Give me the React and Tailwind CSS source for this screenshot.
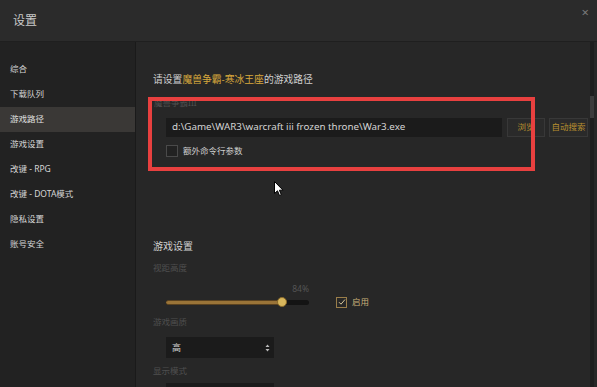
import React from 'react'

const menu = ['综合', '下载队列', '游戏路径', '游戏设置', '改键 - RPG', '改键 - DOTA模式', '隐私设置', '账号安全']

function Sidebar() {
  return (
    <div className="w-[136px] bg-[#222222] border-r border-[#1a1a1a] pt-[15px] shrink-0">
      {menu.map((item) => (
        <div
          key={item}
          className={
            item === '游戏路径'
              ? 'h-[25px] flex items-center pl-[10px] text-[8.5px] text-[#e0e0e0] bg-[#3a3836]'
              : 'h-[25px] flex items-center pl-[10px] text-[8.5px] text-[#d6d6d6]'
          }
        >
          {item}
        </div>
      ))}
    </div>
  )
}

function Label({ children, className = '' }) {
  return <div className={'text-[8.5px] leading-[12px] text-[#4f4f4f] ' + className}>{children}</div>
}

function Content() {
  return (
    <div className="flex-1 flex bg-[#272727] relative">
      <div className="flex-1 pl-[17px]">
        <div className="mt-[31px] text-[9.8px] leading-[14px] text-[#cfcfcf]">
          请设置<span className="text-[#d8a83c]">魔兽争霸-寒冰王座</span>的游戏路径
        </div>
        <Label className="mt-[10px] ml-[1px]">魔兽争霸III</Label>

        <div className="mt-[9px] ml-[13px] flex items-center h-[19px]">
          <div className="w-[336px] h-[19px] bg-[#1b1b1b] flex items-center pl-[6px] text-[9.8px] text-[#d4d4d4] whitespace-nowrap overflow-hidden">
            d:\Game\WAR3\warcraft iii frozen throne\War3.exe
          </div>
          <button className="ml-[5px] w-[38px] h-[19px] border border-[#383838] bg-[#2a2a2a] text-[8.5px] text-[#b8902f]">
            浏览
          </button>
          <button className="ml-[4px] w-[39px] h-[19px] border border-[#383838] bg-[#2a2a2a] text-[8.5px] text-[#b8902f] whitespace-nowrap">
            自动搜索
          </button>
        </div>

        <div className="mt-[8px] ml-[13px] flex items-center h-[12px]">
          <div className="w-[12px] h-[12px] border border-[#4a4a4a] bg-[#222]" />
          <span className="ml-[5px] text-[8.5px] text-[#cfcfcf]">额外命令行参数</span>
        </div>

        <div className="mt-[82px] text-[10px] leading-[14px] text-[#d0d0d0]">游戏设置</div>
        <Label className="mt-[9px]">视距高度</Label>

        <div className="mt-[10px] ml-[13px] w-[143px] text-right text-[8.5px] leading-[10px] text-[#555]">84%</div>

        <div className="mt-[3px] ml-[13px] flex items-center h-[10px]">
          <div className="relative w-[143px] h-[5px] bg-[#141414] rounded-full">
            <div className="h-[5px] w-[116px] bg-[#9a7438] rounded-full border-y border-[#5a4220]" />
            <div className="absolute left-[111px] top-[-2.5px] w-[10px] h-[10px] rounded-full bg-[#d8b65c] border border-[#8a6a2a]" />
          </div>
          <div className="ml-[27px] w-[11px] h-[11px] border border-[#9a7e4a] flex items-center justify-center">
            <svg width="8" height="8" viewBox="0 0 8 8">
              <path d="M1 4.2 L3 6.2 L7 1.5" fill="none" stroke="#d8c79a" strokeWidth="1" />
            </svg>
          </div>
          <span className="ml-[5px] text-[8.5px] text-[#c9b07a]">启用</span>
        </div>

        <Label className="mt-[9px]">游戏画质</Label>
        <div className="mt-[9px] ml-[13px] w-[108px] h-[21px] bg-[#1b1b1b] flex items-center justify-between pl-[6px] pr-[4px] text-[9px] text-[#d4d4d4]">
          <span>高</span>
          <svg width="5" height="8" viewBox="0 0 5 8">
            <path d="M0.5 3 L2.5 0.5 L4.5 3 Z M0.5 5 L2.5 7.5 L4.5 5 Z" fill="#bbbbbb" />
          </svg>
        </div>
        <Label className="mt-[7px]">显示模式</Label>
        <div className="mt-[6px] ml-[13px] w-[108px] h-[21px] bg-[#1b1b1b]" />
      </div>

      {/* scrollbar */}
      <div className="w-[7px] shrink-0 flex justify-start">
        <div className="w-[4px] bg-[#1e1e1e] relative">
          <div className="absolute top-[54px] left-0 w-[4px] h-[22px] bg-[#3c3c3c]" />
        </div>
      </div>
    </div>
  )
}

export default function App() {
  return (
    <div
      className="w-[597px] h-[387px] flex flex-col overflow-hidden bg-[#272727] relative"
      style={{ fontFamily: '"Noto Sans", "Noto Sans CJK SC", sans-serif' }}
    >
      <div className="h-[42px] bg-[#2b2b2b] border-b border-[#1f1f1f] flex justify-between shrink-0">
        <div className="pl-[13px] flex items-center text-[12px] text-[#c9c9c9]">设置</div>
        <div className="mt-[4px] mr-[8px] text-[13px] leading-[16px] text-[#7a7a7a]">×</div>
      </div>
      <div className="flex flex-1 min-h-0">
        <Sidebar />
        <Content />
      </div>

      {/* red annotation frame */}
      <div className="absolute left-[148px] top-[97px] w-[387px] h-[74px] border-[4px] border-[#e8403f] pointer-events-none" />

      {/* mouse pointer */}
      <svg className="absolute left-[274px] top-[181px]" width="10" height="16" viewBox="0 0 10 16">
        <path d="M0.5 0.5 L0.5 12.5 L3.5 9.8 L5.5 14.5 L7.3 13.7 L5.4 9.2 L9 9.2 Z" fill="#ffffff" stroke="#000000" strokeWidth="1" />
      </svg>
    </div>
  )
}
